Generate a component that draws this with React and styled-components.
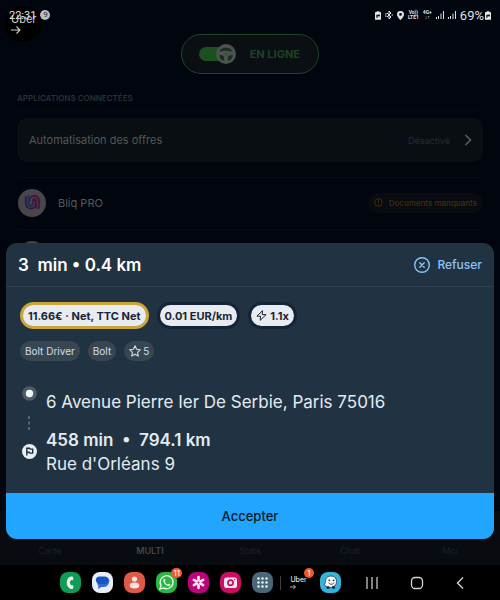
import { useState } from "react";
import styled, { createGlobalStyle, css } from "styled-components";

const GlobalStyle = createGlobalStyle`
    * {
        box-sizing: border-box;
    }

    body {
        margin: 0;
        background-color: #000;
        color: #e4ebf1;
        font-family: Inter, "Liberation Sans", sans-serif;
    }

    button {
        font-family: inherit;
        border: none;
        padding: 0;
        cursor: pointer;
    }

    svg {
        display: block;
        flex-shrink: 0;
    }
`;

const Screen = styled.div`
    position: relative;
    min-height: 100vh;
    display: flex;
    flex-direction: column;
    background-color: #01050d;
`;

const StatusBar = styled.header`
    height: 30px;
    padding: 0 9px;
    display: flex;
    align-items: center;
    justify-content: space-between;
    color: #dfe1e4;
    font-family: Roboto, sans-serif;
    font-size: 12px;
`;

const StatusGroup = styled.div`
    display: flex;
    align-items: center;
    gap: ${({ $gap }) => $gap}px;
`;

const Clock = styled.span`
    position: relative;
    z-index: 2;
    font-size: 11px;
`;

const NoticeCount = styled.span`
    width: 10px;
    height: 10px;
    border-radius: 50%;
    background-color: #b9bcc0;
    color: #22262c;
    font-size: 8px;
    line-height: 10px;
    text-align: center;
`;

const NetworkLabel = styled.span`
    font-size: 5px;
    font-weight: 700;
    line-height: 5px;
    text-align: center;
`;

const Battery = styled.span`
    font-size: 13px;
`;

const Bubble = styled.button`
    position: absolute;
    z-index: 1;
    top: 6px;
    left: 4px;
    width: 38px;
    height: 36px;
    border-radius: 50%;
    padding-left: 7px;
    background-color: #000;
    color: #c9cbcd;
    font-size: 11px;
    line-height: 12px;
    text-align: left;
`;

const Main = styled.main`
    flex: 1;
    padding: 4px 17px 0;
`;

const OnlineToggle = styled.label`
    width: 138px;
    height: 40px;
    margin: 0 auto;
    padding: 0 18px 0 16px;
    display: flex;
    align-items: center;
    justify-content: space-between;
    border: 1px solid #1c4529;
    border-radius: 20px;
    background-color: #0a0f13;
    color: #1b4325;
    font-size: 11px;
    font-weight: 700;
    cursor: pointer;
`;

const Switch = styled.span`
    position: relative;
    width: 38px;
    height: 20px;
    display: flex;
    align-items: center;

    svg {
        position: absolute;
        right: ${({ $on }) => ($on ? 0 : 18)}px;
        pointer-events: none;
    }
`;

const SwitchInput = styled.input`
    appearance: none;
    width: 34px;
    height: 14px;
    margin: 0 0 0 1px;
    border-radius: 7px;
    background-color: #1d5020;
`;

const SectionTitle = styled.h2`
    margin: 18px 0 0;
    padding-bottom: 6px;
    border-bottom: 1px solid #050a11;
    color: #2b3036;
    font-size: 8px;
    font-weight: 600;
    line-height: 12px;
`;

const OffersCard = styled.button`
    width: 100%;
    height: 44px;
    margin: 7px 0 15px;
    padding: 0 11px 0 12px;
    display: flex;
    align-items: center;
    gap: 14px;
    border-radius: 10px;
    background-color: #080e12;
    color: #52575b;
    font-size: 11px;
`;

const OffersLabel = styled.span`
    flex: 1;
    text-align: left;
`;

const OffersState = styled.span`
    color: #272d32;
    font-size: 9px;
`;

const AppRow = styled.div`
    height: 52px;
    padding-bottom: 2px;
    display: flex;
    align-items: center;
    border-top: 1px solid #070c13;
`;

const HiddenRows = styled.div`
    height: 16px;
    padding-top: 11px;
    overflow: hidden;
    border-top: 1px solid #070c13;
`;

const Avatar = styled.div`
    width: 28px;
    height: 28px;
    margin-left: 1px;
    display: flex;
    align-items: center;
    justify-content: center;
    border-radius: 50%;
    background-color: #48454b;
`;

const AppName = styled.span`
    flex: 1;
    margin-left: 12px;
    color: #55595d;
    font-size: 11px;
`;

const MissingBadge = styled.span`
    height: 20px;
    padding: 0 6px;
    display: flex;
    align-items: center;
    gap: 6px;
    border-radius: 10px;
    background-color: #080b0f;
    color: #482c0b;
    font-size: 8px;
    font-weight: 500;
`;

const TabBar = styled.nav`
    height: 54px;
    padding-bottom: 8px;
    display: grid;
    grid-template-columns: repeat(5, 1fr);
    align-items: end;
    background-color: #080c10;
`;

const Tab = styled.a`
    color: ${({ $active }) => ($active ? "#42474b" : "#1b2024")};
    font-size: 9px;
    font-weight: ${({ $active }) => ($active ? 600 : 400)};
    line-height: 12px;
    text-align: center;
    text-decoration: none;
`;

const Sheet = styled.section`
    position: absolute;
    left: 6px;
    right: 6px;
    bottom: 61px;
    overflow: hidden;
    border-radius: 11px;
    background-color: #213342;
`;

const SheetHeader = styled.div`
    height: 44px;
    padding: 0 12px;
    display: flex;
    align-items: center;
    justify-content: space-between;
    border-bottom: 1px solid #2e404e;
`;

const SheetTitle = styled.h1`
    margin: 0;
    color: #fff;
    font-size: 17px;
    font-weight: 600;
    white-space: pre;
`;

const RefuseButton = styled.button`
    display: flex;
    align-items: center;
    gap: 7px;
    background: none;
    color: #8ac4f8;
    font-size: 12px;
    font-weight: 500;
`;

const SheetBody = styled.div`
    padding: 15px 14px 17px;
`;

const TagRow = styled.div`
    display: flex;
    gap: 8px;
`;

const pill = css`
    display: flex;
    align-items: center;
    white-space: nowrap;
`;

const PricePill = styled.span`
    ${pill}
    height: 27px;
    padding: 0 5px;
    gap: 3px;
    border: 3px solid ${({ $gold }) => ($gold ? "#c8a637" : "#14243a")};
    border-radius: 14px;
    background-color: #e8ebef;
    color: #182536;
    font-size: 11px;
    font-weight: 700;
`;

const Chip = styled.span`
    ${pill}
    height: 20px;
    margin-top: 12px;
    padding: 0 5px;
    gap: 2px;
    border-radius: 10px;
    background-color: #374752;
    color: #d7dee4;
    font-size: 10px;
`;

const Route = styled.div`
    margin-top: 25px;
    display: grid;
    grid-template-columns: 18px 1fr;
    column-gap: 8px;
`;

const Timeline = styled.div`
    height: 73px;
    display: flex;
    flex-direction: column;
    align-items: center;
    justify-content: space-between;
`;

const Stops = styled.div`
    padding-top: 4px;
`;

const StopText = styled.p`
    margin: ${({ $spaced }) => ($spaced ? "0 0 14px" : 0)};
    font-size: 17px;
    font-weight: ${({ $bold }) => ($bold ? 600 : 400)};
    line-height: 24px;
    white-space: pre-wrap;
`;

const AcceptButton = styled.button`
    width: 100%;
    height: 46px;
    background-color: #22a5ff;
    color: #071827;
    font-size: 13px;
    font-weight: 500;
`;

const SystemBar = styled.footer`
    height: 35px;
    padding: 0 32px 0 60px;
    display: flex;
    align-items: center;
    justify-content: space-between;
    background-color: #000;
`;

const Dock = styled.div`
    display: flex;
    align-items: center;
    gap: 11px;
`;

const DockApp = styled.button`
    position: relative;
    width: 21px;
    height: 21px;
    display: flex;
    align-items: center;
    justify-content: center;
    border-radius: 8px;
    background-color: ${({ $color }) => $color};
    color: #fff;
    font-size: 7px;
    line-height: 8px;
    text-align: left;
`;

const DockDivider = styled.span`
    width: 1px;
    height: 14px;
    margin: 0 -4px;
    background-color: #414141;
`;

const Badge = styled.span`
    position: absolute;
    top: -4px;
    right: -5px;
    min-width: 10px;
    height: 10px;
    padding: 0 2px;
    border-radius: 5px;
    background-color: #ec5a2c;
    color: #fff;
    font-size: 8px;
    line-height: 10px;
    text-align: center;
`;

const SystemKeys = styled.div`
    display: flex;
    align-items: center;
    gap: 30px;
`;

const SystemKey = styled.button`
    background: none;
    color: #d5d5d5;
`;

const BatterySaverIcon = () => (
    <svg width="6" height="9" viewBox="0 0 7 10">
        <path d="M2 0h3v1h1a1 1 0 0 1 1 1v7a1 1 0 0 1-1 1H1a1 1 0 0 1-1-1V2a1 1 0 0 1 1-1h1z" fill="#e8e8e8" />
        <path d="M1.5 4h3v-1l1.5 2-1.5 2V6H3v1.5H1.5z" fill="#10141a" />
    </svg>
);

const BluetoothIcon = () => (
    <svg width="8" height="10" viewBox="0 0 8 10" fill="none" stroke="currentColor">
        <path d="M2 3l4 4-2 2V1l2 2-4 4M0 5h1.500M6.500 5H8M.5 3.500h1M.5 6.500h1" />
    </svg>
);

const PinIcon = () => (
    <svg width="7" height="9" viewBox="0 0 7 9" fill="currentColor">
        <path fillRule="evenodd" d="M3.5 0A3.4 3.4 0 0 0 0 3.4C0 5.7 3.5 9 3.5 9S7 5.7 7 3.4A3.4 3.4 0 0 0 3.5 0Zm0 2a1.4 1.4 0 1 1 0 2.8 1.4 1.4 0 0 1 0-2.8Z" />
    </svg>
);

const SignalIcon = () => (
    <svg width="8" height="8" viewBox="0 0 8 8" fill="currentColor">
        <path d="M0 6h1v2H0zM2 5h1v3H2zM4.5 2.5h1V8h-1zM7 0h1v8H7z" />
    </svg>
);

const WheelIcon = () => (
    <svg width="20" height="20" viewBox="0 0 20 20">
        <circle cx="10" cy="10" r="10" fill="#4e5250" />
        <path d="M3.300 7.800C5 2.300 15 2.300 16.700 7.800 12.500 6.300 7.500 6.300 3.300 7.800ZM3.100 11.200h2.400c1.600 0 2.500 1 2.600 2.600l.2 3C5.500 16.300 3.500 14 3.100 11.200Zm13.800 0h-2.400c-1.600 0-2.500 1-2.600 2.600l-.2 3c2.800-.5 4.800-2.800 5.200-5.600Z" fill="#1a2e1e" />
        <circle cx="10" cy="10" r="1.200" fill="#3b4a3d" />
    </svg>
);

const BliqLogo = () => (
    <svg width="17" height="17" viewBox="0 0 17 17" fill="none" strokeLinecap="round" strokeWidth="1.800">
        <path d="M1.800 3v6.500a5 5 0 0 0 5 5c3 0 4.700-2 4.700-4.500V8a2 2 0 0 0-2-2" stroke="#281d4a" />
        <path d="M4.500 2v7.500c0 3 4.300 3 4.300 0" stroke="#142f5e" />
        <path d="M5.500 6.500C5.500 4 7.500 2 10 2c3 0 5 2 5 5v7" stroke="#451636" />
        <path d="M8.800 9.500V7.500c0-3.500 3.700-3.500 3.700 0V14" stroke="#4d1738" />
    </svg>
);

const InfoIcon = () => (
    <svg width="9" height="9" viewBox="0 0 9 9" fill="none" stroke="currentColor">
        <circle cx="4.500" cy="4.500" r="3.800" />
        <path d="M4.500 2.200v2.800M4.500 6v1" />
    </svg>
);

const RefuseIcon = () => (
    <svg width="16" height="16" viewBox="0 0 16 16" fill="none" stroke="currentColor" strokeWidth="1.400" strokeLinecap="round">
        <circle cx="8" cy="8" r="7.300" />
        <path d="m5.800 5.800 4.400 4.400m0-4.400-4.400 4.400" />
    </svg>
);

const BoltIcon = () => (
    <svg width="11" height="11" viewBox="0 0 11 11" fill="none" stroke="currentColor" strokeWidth="1" strokeLinejoin="round">
        <path d="M6.500.7.900 6.200H4.600L4.200 10.300 10.100 4.600H6.200z" />
    </svg>
);

const StarIcon = () => (
    <svg width="12" height="12" viewBox="0 0 12 12" fill="none" stroke="currentColor" strokeWidth="1.100" strokeLinejoin="round">
        <path d="m6 .8 1.600 3.400 3.700.5-2.700 2.600.7 3.800L6 9.300l-3.300 1.800.7-3.800L.7 4.700l3.700-.5z" />
    </svg>
);

const OriginIcon = () => (
    <svg width="15" height="15" viewBox="0 0 15 15">
        <circle cx="7.500" cy="7.500" r="7.300" fill="#4d5c67" />
        <circle cx="7.500" cy="7.500" r="3.700" fill="#f2f5f8" />
    </svg>
);

const DotsIcon = () => (
    <svg width="2" height="14" viewBox="0 0 2 14" fill="#566673">
        <path d="M0 0h2v3H0zM0 5.500h2v3H0zM0 11h2v3H0z" />
    </svg>
);

const FlagIcon = () => (
    <svg width="15" height="15" viewBox="0 0 15 15">
        <circle cx="7.500" cy="7.500" r="7.500" fill="#e8eef3" />
        <path d="M4.800 11.500V4.300h2.700l.7.800h2.500v4H7.900l-.7-.8H4.800" fill="none" stroke="#1d2d3b" strokeWidth="1.400" />
    </svg>
);

const PhoneIcon = () => (
    <svg width="21" height="21" viewBox="0 0 21 21">
        <path d="M11 4.500c-5.700 1-5.700 11 0 12.500 1.500.3 2.300-.3 2.300-1.500v-1c0-1-.7-1.400-2.100-1.200-1.700-1.500-1.700-3.700 0-5.200 1.400.2 2.100-.2 2.100-1.200V6c0-1.200-.8-1.800-2.300-1.500Z" fill="#e9f7ef" />
    </svg>
);

const MessagesIcon = () => (
    <svg width="21" height="21" viewBox="0 0 21 21">
        <path d="M10 5h3.500a4 4 0 0 1 3.800 5c-.8 3-2.800 5-5.800 5H9.500l-3.500 2 .5-3.200C5.300 12.800 5 11 5.500 9.500Z" fill="#2c6ddb" />
        <path d="M7.500 4.500h5a3.800 3.800 0 0 1 0 7.600H8.500c-3 0-4.700-2-4.700-4.100 0-2 1.700-3.500 3.700-3.500Z" fill="#1854bf" />
    </svg>
);

const ContactsIcon = () => (
    <svg width="21" height="21" viewBox="0 0 21 21" fill="#fbe3dc">
        <circle cx="10.500" cy="7" r="2.600" />
        <ellipse cx="10.500" cy="13.500" rx="4.800" ry="3" />
    </svg>
);

const WhatsAppIcon = () => (
    <svg width="21" height="21" viewBox="0 0 21 21">
        <path d="m4 17 1-3.500a6.500 6.500 0 1 1 2.500 2.400Z" fill="none" stroke="#e6f9e9" strokeWidth="1.300" />
        <path d="M8 7c-1.500 1.500-.2 4 1.500 5.500s4 2.500 5 .7c.4-.8-1.500-1.700-2-1.500l-.8.8c-1.400-.5-2.300-1.500-2.900-2.800l.7-.9C9.500 8 8.800 6.300 8 7Z" fill="#e6f9e9" />
    </svg>
);

const FlowerIcon = () => (
    <svg width="21" height="21" viewBox="0 0 21 21" stroke="#fde7f3" strokeWidth="2.700" strokeLinecap="round">
        <path d="M10.500 5.200v2.500M10.500 13.300v2.500M5.900 7.900l2.100 1.200M13 11.900l2.100 1.200M5.900 13.100 8 11.900M13 9.100l2.100-1.200" />
        <circle cx="10.500" cy="10.500" r="1.600" fill="none" strokeWidth="1.300" />
    </svg>
);

const CameraIcon = () => (
    <svg width="21" height="21" viewBox="0 0 21 21">
        <rect x="4" y="5.500" width="13" height="10.500" rx="2.500" fill="#fce5f1" />
        <circle cx="10.500" cy="10.800" r="2.600" fill="none" stroke="#c50f5c" strokeWidth="1.700" />
        <circle cx="14.600" cy="7.500" r=".8" fill="#c50f5c" />
    </svg>
);

const GridIcon = () => (
    <svg width="21" height="21" viewBox="0 0 21 21" fill="#e6ecf2">
        {[6.5, 10.5, 14.5].map((y) =>
            [6.5, 10.5, 14.5].map((x) => <circle key={`${x}-${y}`} cx={x} cy={y} r="1.300" />)
        )}
    </svg>
);

const WazeIcon = () => (
    <svg width="21" height="21" viewBox="0 0 21 21">
        <path d="M11 4c-4 0-5.500 3-5.500 5.500 0 1.500-.5 2.200-1.500 2.500 1 2 3 3.500 6 3.500 4 0 6.500-2.500 6.500-6S14.500 4 11 4Z" fill="#f5f8fa" stroke="#213541" strokeWidth=".8" />
        <circle cx="8" cy="15.500" r="1.600" fill="#213541" />
        <circle cx="13.500" cy="15.300" r="1.600" fill="#213541" />
        <circle cx="9.300" cy="8.300" r=".9" fill="#213541" />
        <circle cx="13.500" cy="8.300" r=".9" fill="#213541" />
        <path d="M8.800 11c1 1.800 4 1.800 5 0" fill="none" stroke="#213541" strokeWidth=".9" strokeLinecap="round" />
    </svg>
);

const ArrowIcon = ({ size }) => (
    <svg width={size} height={size} viewBox="0 0 10 10" fill="none" stroke="currentColor" strokeWidth="1.100">
        <path d="M0 5h9M5.500 1.500 9 5 5.500 8.500" />
    </svg>
);

const dockApps = [
    { label: "Phone", color: "#109c56", Icon: PhoneIcon },
    { label: "Messages", color: "#e9edf5", Icon: MessagesIcon },
    { label: "Contacts", color: "#e05848", Icon: ContactsIcon },
    { label: "WhatsApp", color: "#2cb742", Icon: WhatsAppIcon, count: 11 },
    { label: "Gallery", color: "#b8067a", Icon: FlowerIcon },
    { label: "Camera", color: "#ca0e62", Icon: CameraIcon },
    { label: "Apps", color: "#4b6579", Icon: GridIcon },
];

const tabs = ["Carte", "MULTI", "Stats", "Chat", "Moi"];

const App = () => {
    const [online, setOnline] = useState(true);

    return (
        <>
            <GlobalStyle />
            <Screen>
                <StatusBar>
                    <StatusGroup $gap={4}>
                        <Clock>22:31</Clock>
                        <NoticeCount>9</NoticeCount>
                    </StatusGroup>
                    <StatusGroup $gap={4}>
                        <BatterySaverIcon />
                        <BluetoothIcon />
                        <PinIcon />
                        <NetworkLabel>Vo))<br />LTE1</NetworkLabel>
                        <NetworkLabel>4G+<br />↓↑</NetworkLabel>
                        <SignalIcon />
                        <SignalIcon />
                        <StatusGroup $gap={1}>
                            <Battery>69%</Battery>
                            <BatterySaverIcon />
                        </StatusGroup>
                    </StatusGroup>
                </StatusBar>
                <Bubble>
                    Uber
                    <ArrowIcon size={10} />
                </Bubble>

                <Main>
                    <OnlineToggle>
                        <Switch $on={online}>
                            <SwitchInput type="checkbox" checked={online} onChange={(e) => setOnline(e.target.checked)} />
                            <WheelIcon />
                        </Switch>
                        EN LIGNE
                    </OnlineToggle>
                    <SectionTitle>APPLICATIONS CONNECTÉES</SectionTitle>
                    <OffersCard>
                        <OffersLabel>Automatisation des offres</OffersLabel>
                        <OffersState>Désactivé</OffersState>
                        <svg width="8" height="12" viewBox="0 0 8 12" fill="none" stroke="#5b6064" strokeWidth="1.500">
                            <path d="m1.500 1 5 5-5 5" />
                        </svg>
                    </OffersCard>
                    <AppRow>
                        <Avatar><BliqLogo /></Avatar>
                        <AppName>Bliq PRO</AppName>
                        <MissingBadge><InfoIcon />Documents manquants</MissingBadge>
                    </AppRow>
                    <HiddenRows>
                        <Avatar />
                    </HiddenRows>
                </Main>

                <TabBar>
                    {tabs.map((tab) => (
                        <Tab key={tab} href="#" $active={tab === "MULTI"}>{tab}</Tab>
                    ))}
                </TabBar>

                <Sheet>
                    <SheetHeader>
                        <SheetTitle>3  min • 0.4 km</SheetTitle>
                        <RefuseButton><RefuseIcon />Refuser</RefuseButton>
                    </SheetHeader>
                    <SheetBody>
                        <TagRow>
                            <PricePill $gold>11.66€ · Net, TTC Net</PricePill>
                            <PricePill>0.01 EUR/km</PricePill>
                            <PricePill><BoltIcon />1.1x</PricePill>
                        </TagRow>
                        <TagRow>
                            <Chip>Bolt Driver</Chip>
                            <Chip>Bolt</Chip>
                            <Chip><StarIcon />5</Chip>
                        </TagRow>
                        <Route>
                            <Timeline>
                                <OriginIcon />
                                <DotsIcon />
                                <FlagIcon />
                            </Timeline>
                            <Stops>
                                <StopText $spaced>6 Avenue Pierre Ier De Serbie, Paris 75016</StopText>
                                <StopText $bold>458 min  •  794.1 km</StopText>
                                <StopText>Rue d'Orléans 9</StopText>
                            </Stops>
                        </Route>
                    </SheetBody>
                    <AcceptButton>Accepter</AcceptButton>
                </Sheet>

                <SystemBar>
                    <Dock>
                        {dockApps.map(({ label, color, Icon, count }) => (
                            <DockApp key={label} aria-label={label} $color={color}>
                                <Icon />
                                {count && <Badge>{count}</Badge>}
                            </DockApp>
                        ))}
                        <DockDivider />
                        <DockApp $color="#000">
                            <span>Uber<ArrowIcon size={6} /></span>
                            <Badge>1</Badge>
                        </DockApp>
                        <DockApp aria-label="Waze" $color="#35b3dc"><WazeIcon /></DockApp>
                    </Dock>
                    <SystemKeys>
                        <SystemKey aria-label="Recents">
                            <svg width="16" height="14" viewBox="0 0 16 14" stroke="currentColor" strokeWidth="1.200">
                                <path d="M3 1v12M8 1v12M13 1v12" />
                            </svg>
                        </SystemKey>
                        <SystemKey aria-label="Home">
                            <svg width="14" height="14" viewBox="0 0 14 14" fill="none" stroke="currentColor" strokeWidth="1.300">
                                <rect x="1.500" y="1.500" width="11" height="11" rx="3.500" />
                            </svg>
                        </SystemKey>
                        <SystemKey aria-label="Back">
                            <svg width="14" height="14" viewBox="0 0 14 14" fill="none" stroke="currentColor" strokeWidth="1.400">
                                <path d="M9 1.500 3.500 7 9 12.500" />
                            </svg>
                        </SystemKey>
                    </SystemKeys>
                </SystemBar>
            </Screen>
        </>
    );
};

export default App;
